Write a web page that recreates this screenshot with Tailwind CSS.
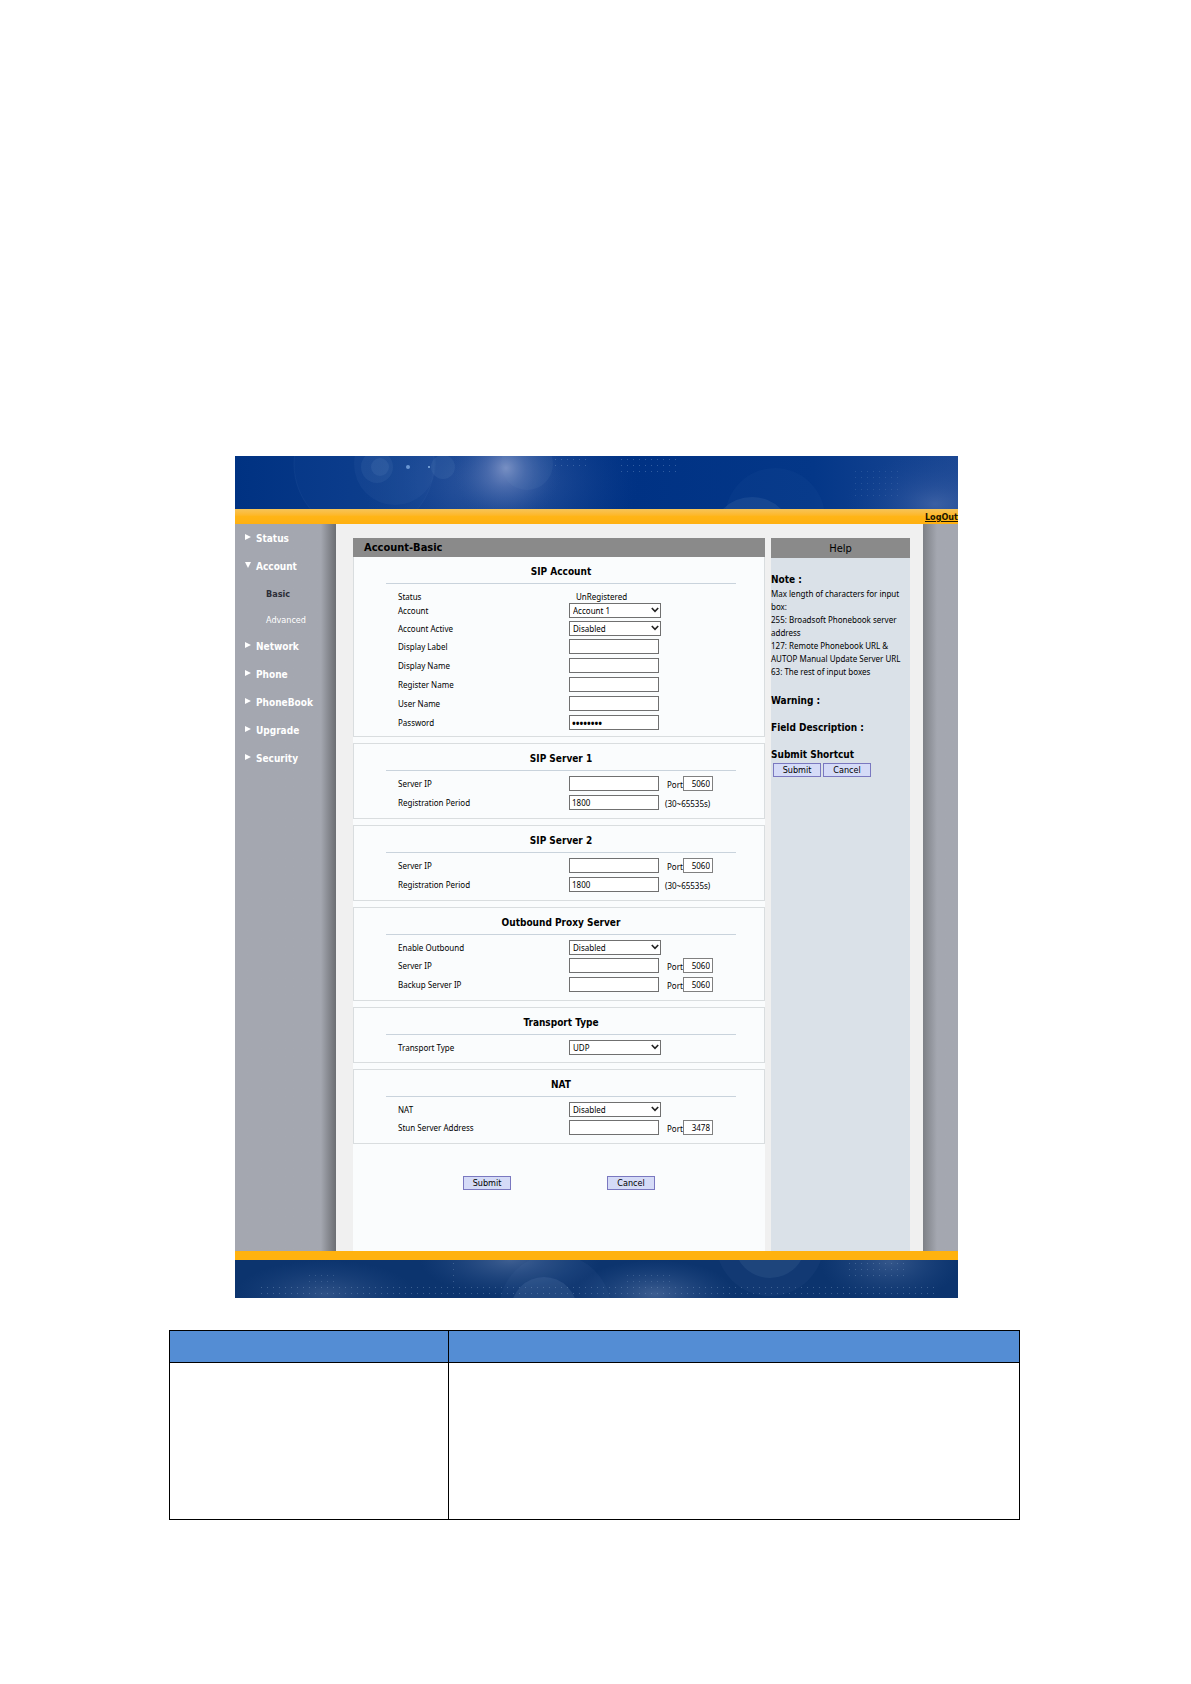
<!DOCTYPE html>
<html lang="en">
<head>
  <meta charset="UTF-8" />
  <meta name="viewport" content="width=device-width, initial-scale=1.0" />
  <title>Account-Basic</title>
  <script src="https://cdn.jsdelivr.net/npm/@tailwindcss/browser@4"></script>
</head>
<body class="bg-white text-black font-['DejaVu_Sans_Condensed','DejaVu_Sans',sans-serif] text-[8px] leading-[14px]">
  <div class="pt-[456px] pb-40">
    <div class="w-full max-w-[725px] mx-auto pl-[2px]">

      <!-- banner -->
      <header>
        <svg class="block w-full h-[53px]" viewBox="0 0 723 53" preserveAspectRatio="xMidYMid slice" aria-hidden="true">
          <defs>
            <linearGradient id="sky" x1="0" x2="1" y1="0" y2="0">
              <stop offset="0" stop-color="#003282" />
              <stop offset=".3" stop-color="#0f3f8e" />
              <stop offset=".55" stop-color="#003284" />
              <stop offset=".8" stop-color="#043788" />
              <stop offset="1" stop-color="#1c4894" />
            </linearGradient>
            <radialGradient id="glow">
              <stop offset="0" stop-color="#7e93c6" stop-opacity=".95" />
              <stop offset=".35" stop-color="#5674b3" stop-opacity=".6" />
              <stop offset="1" stop-color="#1f4c98" stop-opacity="0" />
            </radialGradient>
            <pattern id="dots" width="6" height="6" patternUnits="userSpaceOnUse">
              <rect x="2" y="3" width="1" height="1" fill="#5f86bb" fill-opacity=".5" />
            </pattern>
          </defs>
          <rect width="723" height="53" fill="url(#sky)" />
          <ellipse cx="265" cy="25" rx="140" ry="80" fill="url(#glow)" opacity=".45" />
          <circle cx="129" cy="8" r="70" fill="#4a76b8" fill-opacity=".06" stroke="#4a76b8" stroke-opacity=".12" />
          <circle cx="160" cy="8" r="41" fill="#4a76b8" fill-opacity=".12" />
          <circle cx="142" cy="11" r="16" fill="#6d92c8" fill-opacity=".12" />
          <circle cx="145" cy="11" r="9" fill="#6d92c8" fill-opacity=".15" />
          <circle cx="208" cy="11" r="12" fill="#6d92c8" fill-opacity=".14" />
          <circle cx="271" cy="12" r="56" fill="url(#glow)" />
          <circle cx="292" cy="8" r="26" fill="#6d92c8" fill-opacity=".1" />
          <circle cx="173" cy="11" r="2" fill="#6b96d2" />
          <circle cx="194" cy="11" r="1" fill="#8ab4e6" />
          <rect x="320" y="0" width="36" height="12" fill="url(#dots)" />
          <rect x="384" y="0" width="62" height="16" fill="url(#dots)" />
          <rect x="615" y="14" width="50" height="28" fill="url(#dots)" opacity=".6" />
          <circle cx="517" cy="82" r="41" fill="#5a83bf" fill-opacity=".18" />
          <circle cx="540" cy="62" r="50" fill="#5a83bf" fill-opacity=".05" />
          <ellipse cx="700" cy="48" rx="90" ry="50" fill="url(#glow)" opacity=".35" />
        </svg>
        <div class="h-[15px] flex justify-end items-end bg-linear-to-b from-[#f6c456] via-[#ffb516] to-[#ffb010]">
          <a href="#" class="font-bold underline text-[9px] leading-[14px] text-[#1c1600]">LogOut</a>
        </div>
      </header>

      <div class="flex bg-[#a4a7b0]">
        <!-- left menu -->
        <nav class="w-[101px] shrink-0 pt-px pl-[10px] font-bold text-[10px] text-white bg-linear-to-r from-[#a4a7b0] from-85% to-[#6c6e73]">
          <a href="#" class="flex items-center gap-[5px] h-7">
            <svg class="w-[6px] h-[6px] mb-[5px]" viewBox="0 0 6 6" fill="currentColor"><path d="M0 0L6 3L0 6Z" /></svg>Status</a>
          <a href="#" class="flex items-center gap-[5px] h-7">
            <svg class="w-[6px] h-[6px] mb-[5px]" viewBox="0 0 6 6" fill="currentColor"><path d="M0 0H6L3 6Z" /></svg>Account</a>
          <a href="#" class="flex items-center h-[26px] pl-[21px] text-[9px] text-[#2c2e38]">Basic</a>
          <a href="#" class="flex items-center h-[26px] pl-[21px] text-[9px] font-normal">Advanced</a>
          <a href="#" class="flex items-center gap-[5px] h-7">
            <svg class="w-[6px] h-[6px] mb-[5px]" viewBox="0 0 6 6" fill="currentColor"><path d="M0 0L6 3L0 6Z" /></svg>Network</a>
          <a href="#" class="flex items-center gap-[5px] h-7">
            <svg class="w-[6px] h-[6px] mb-[5px]" viewBox="0 0 6 6" fill="currentColor"><path d="M0 0L6 3L0 6Z" /></svg>Phone</a>
          <a href="#" class="flex items-center gap-[5px] h-7">
            <svg class="w-[6px] h-[6px] mb-[5px]" viewBox="0 0 6 6" fill="currentColor"><path d="M0 0L6 3L0 6Z" /></svg>PhoneBook</a>
          <a href="#" class="flex items-center gap-[5px] h-7">
            <svg class="w-[6px] h-[6px] mb-[5px]" viewBox="0 0 6 6" fill="currentColor"><path d="M0 0L6 3L0 6Z" /></svg>Upgrade</a>
          <a href="#" class="flex items-center gap-[5px] h-7">
            <svg class="w-[6px] h-[6px] mb-[5px]" viewBox="0 0 6 6" fill="currentColor"><path d="M0 0L6 3L0 6Z" /></svg>Security</a>
        </nav>

        <div class="flex-1 flex gap-[6px] bg-[#f0f0f0] pt-[14px] pl-[17px] pr-[13px]">
          <!-- settings form -->
          <form class="flex-1 bg-[#fafcfd] pb-[61px]" onsubmit="return false">
            <h1 class="h-[19px] pl-[11px] bg-[#8a8a8a] font-bold text-[11px] leading-[20px]">Account-Basic</h1>
            <div id="sections" class="flex flex-col gap-[6px]"></div>
            <div class="flex justify-center gap-24 pt-8">
              <button type="submit" class="w-12 h-[14px] border border-[#7a78c0] bg-[#d5dbf7] text-[9px] leading-[12px]">Submit</button>
              <button type="reset" class="w-12 h-[14px] border border-[#7a78c0] bg-[#d5dbf7] text-[9px] leading-[12px]">Cancel</button>
            </div>
          </form>

          <!-- help -->
          <aside class="w-[139px] shrink-0 bg-[#dae1e8]">
            <h2 class="h-5 bg-[#8a8a8a] text-center text-[11px] leading-[22px]">Help</h2>
            <h3 class="mt-[15px] font-bold text-[10px]">Note :</h3>
            <p class="font-['Noto_Sans',sans-serif] leading-[13px] whitespace-nowrap">Max length of characters for input<br>box:<br>255: Broadsoft Phonebook server<br>address<br>127: Remote Phonebook URL &amp;<br>AUTOP Manual Update Server URL<br>63: The rest of input boxes</p>
            <h3 class="mt-4 font-bold text-[10px]">Warning :</h3>
            <h3 class="mt-[13px] font-bold text-[10px]">Field Description :</h3>
            <h3 class="mt-[13px] font-bold text-[10px]">Submit Shortcut</h3>
            <div class="flex gap-[2px] pl-[2px] pt-px">
              <button class="w-12 h-[14px] border border-[#7a78c0] bg-[#d5dbf7] text-[9px] leading-[12px]">Submit</button>
              <button class="w-12 h-[14px] border border-[#7a78c0] bg-[#d5dbf7] text-[9px] leading-[12px]">Cancel</button>
            </div>
          </aside>
        </div>

        <div class="w-[35px] shrink-0 bg-linear-to-r from-[#7d8086] to-[#a4a7b0] to-40%"></div>
      </div>

      <!-- footer strip -->
      <footer>
        <div class="h-[9px] bg-[#ffb20f]"></div>
        <svg class="block w-full h-[38px]" viewBox="0 0 723 38" preserveAspectRatio="xMidYMid slice" aria-hidden="true">
          <defs>
            <radialGradient id="haze">
              <stop offset="0" stop-color="#7089b4" stop-opacity=".5" />
              <stop offset="1" stop-color="#3c629c" stop-opacity="0" />
            </radialGradient>
            <pattern id="grid" width="6" height="6" patternUnits="userSpaceOnUse">
              <rect x="2" y="3" width="1" height="1" fill="#7e9fc4" fill-opacity=".6" />
            </pattern>
          </defs>
          <rect width="723" height="38" fill="#0c346e" />
          <ellipse cx="90" cy="34" rx="90" ry="34" fill="url(#haze)" opacity=".7" />
          <ellipse cx="275" cy="0" rx="90" ry="36" fill="url(#haze)" />
          <ellipse cx="420" cy="34" rx="80" ry="34" fill="url(#haze)" />
          <ellipse cx="655" cy="2" rx="70" ry="40" fill="url(#haze)" opacity=".8" />
          <circle cx="309" cy="50" r="33" fill="#7c9bc4" fill-opacity=".16" />
          <circle cx="320" cy="50" r="56" fill="#7c9bc4" fill-opacity=".06" />
          <circle cx="535" cy="-18" r="36" fill="#7c9bc4" fill-opacity=".12" />
          <circle cx="535" cy="-18" r="54" fill="#7c9bc4" fill-opacity=".06" />
          <rect x="24" y="26" width="680" height="12" fill="url(#grid)" opacity=".7" />
          <rect x="72" y="15" width="30" height="12" fill="url(#grid)" opacity=".5" />
          <rect x="216" y="3" width="6" height="24" fill="url(#grid)" opacity=".6" />
          <rect x="390" y="15" width="50" height="12" fill="url(#grid)" opacity=".5" />
          <rect x="612" y="3" width="60" height="18" fill="url(#grid)" opacity=".6" />
        </svg>
      </footer>
    </div>

    <div class="w-full max-w-[853px] mx-auto mt-8 pr-[2px]">
      <table class="w-full table-fixed border-collapse border border-black">
        <thead>
          <tr class="h-8 bg-[#548dd4]">
            <th class="w-[279px] border border-black"></th>
            <th class="border border-black"></th>
          </tr>
        </thead>
        <tbody>
          <tr class="h-[157px]">
            <td class="border border-black"></td>
            <td class="border border-black"></td>
          </tr>
        </tbody>
      </table>
    </div>
  </div>

  <script>
    const sections = [
      { title: "SIP Account", rows: [
        { label: "Status", text: "UnRegistered" },
        { label: "Account", select: "Account 1" },
        { label: "Account Active", select: "Disabled" },
        { label: "Display Label" },
        { label: "Display Name" },
        { label: "Register Name" },
        { label: "User Name" },
        { label: "Password", type: "password", value: "12345678" }
      ]},
      { title: "SIP Server 1", rows: [
        { label: "Server IP", port: "5060" },
        { label: "Registration Period", value: "1800", note: "(30~65535s)" }
      ]},
      { title: "SIP Server 2", rows: [
        { label: "Server IP", port: "5060" },
        { label: "Registration Period", value: "1800", note: "(30~65535s)" }
      ]},
      { title: "Outbound Proxy Server", rows: [
        { label: "Enable Outbound", select: "Disabled" },
        { label: "Server IP", port: "5060" },
        { label: "Backup Server IP", port: "5060" }
      ]},
      { title: "Transport Type", rows: [
        { label: "Transport Type", select: "UDP" }
      ]},
      { title: "NAT", rows: [
        { label: "NAT", select: "Disabled" },
        { label: "Stun Server Address", port: "3478" }
      ]}
    ];

    function renderRow(row, id) {
      if (row.text) {
        return `<div class="flex h-[14px] leading-[16px]"><span class="w-[178px]">${row.label}</span><span>${row.text}</span></div>`;
      }
      if (row.select) {
        return `
          <div class="flex h-[18px]">
            <label for="${id}" class="w-[171px] leading-[16px]">${row.label}</label>
            <div class="relative h-[15px]">
              <select id="${id}" class="block appearance-none w-[92px] h-[15px] pl-[3px] border border-[#707070] bg-white leading-[13px]"><option>${row.select}</option></select>
              <svg class="absolute right-[2px] top-[4px] w-[8px] h-[6px] pointer-events-none" viewBox="0 0 8 6" fill="none" stroke="#222" stroke-width="1.6"><path d="M.8 1L4 4.4L7.2 1" /></svg>
            </div>
          </div>`;
      }
      const port = row.port ? `
        <label for="${id}-port" class="w-[24px] pl-[8px] leading-[18px]">Port</label>
        <input id="${id}-port" type="text" value="${row.port}" class="w-[30px] h-[15px] pr-[2px] border border-[#808080] bg-white text-right" />` : "";
      const note = row.note ? `<span class="pl-[6px] leading-[18px]">${row.note}</span>` : "";
      const font = row.type === "password" ? "text-[10px] font-bold" : "";
      return `
        <div class="flex h-[19px]">
          <label for="${id}" class="w-[171px] leading-[16px]">${row.label}</label>
          <input id="${id}" type="${row.type || "text"}" value="${row.value || ""}" class="w-[90px] h-[15px] px-[2px] border border-[#707070] bg-white ${font}" />
          ${port}${note}
        </div>`;
    }

    document.getElementById("sections").innerHTML = sections.map((s, i) => `
      <section class="border border-[#d9dddf] ${i === 0 ? "border-t-0 pb-[2px]" : "pb-[4px]"}">
        <h2 class="ml-8 mr-7 h-[27px] border-b border-[#c9d3dc] text-center font-bold text-[10px] leading-[30px]">${s.title}</h2>
        <div class="pl-[44px] pt-[5px] font-['Noto_Sans',sans-serif]">${s.rows.map((r, j) => renderRow(r, `f${i}-${j}`)).join("")}</div>
      </section>`).join("");
  </script>
</body>
</html>
